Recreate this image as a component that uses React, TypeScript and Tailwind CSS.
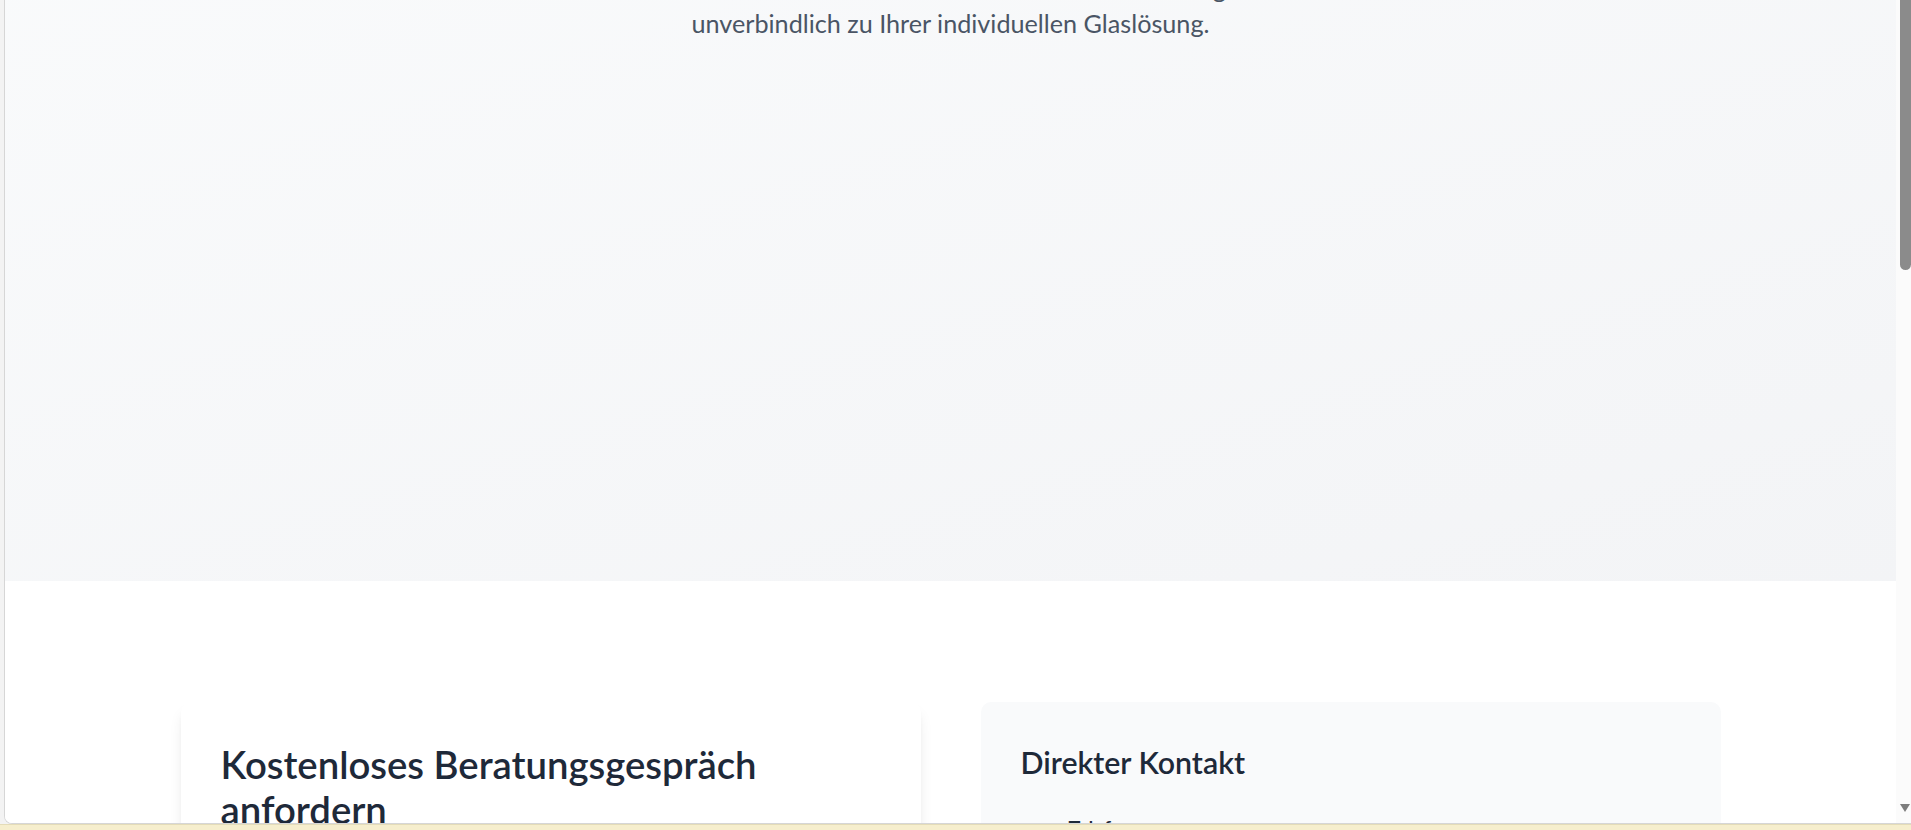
import { Phone, Mail, MapPin } from 'lucide-react';

const font = { fontFamily: 'Lato, "Noto Sans", sans-serif' };

function ContactItem({ icon, title, value }: { icon: React.ReactNode; title: string; value: string }) {
  return (
    <div className="flex gap-[18px]">
      <div className="mt-[14px] flex h-[30px] w-[30px] shrink-0 items-center justify-center text-blue-600">
        {icon}
      </div>
      <div>
        <p className="text-[20px] leading-[30px] font-semibold text-gray-800">{title}</p>
        <p className="text-[20px] leading-[30px] text-gray-600">{value}</p>
      </div>
    </div>
  );
}

export default function App() {
  return (
    <div className="flex h-[830px] w-[1911px] flex-col overflow-hidden bg-[#f3f3f3]" style={font}>
      {/* browser viewport */}
      <div className="ml-[4px] flex min-h-0 flex-1 overflow-hidden rounded-bl-[8px] border-b border-l border-[#d6d6d6] bg-white">
        <main className="min-w-0 flex-1 overflow-hidden">
          {/* Hero tail */}
          <section className="h-[581px] overflow-hidden bg-linear-to-br from-gray-50 to-gray-100">
            <p className="-mt-[29px] text-center text-[25.2px] leading-[35px] text-gray-600">
              Kontaktieren Sie uns für eine kostenlose Beratung
              <br />
              unverbindlich zu Ihrer individuellen Glaslösung.
            </p>
          </section>

          {/* Contact section */}
          <section className="bg-white pt-[121px]">
            <div className="mx-auto grid w-[1540px] grid-cols-2 gap-[60px]">
              {/* Form card */}
              <div className="rounded-[10px] bg-white p-10 shadow-lg">
                <h2 className="mb-[30px] text-[38.3px] leading-[45px] font-semibold text-gray-800">
                  Kostenloses Beratungsgespräch anfordern
                </h2>
                <form className="flex flex-col gap-6">
                  <input className="h-[55px] rounded-[8px] border border-gray-300 px-5 text-[20px]" placeholder="Name" />
                  <input className="h-[55px] rounded-[8px] border border-gray-300 px-5 text-[20px]" placeholder="E-Mail" />
                </form>
              </div>

              {/* Direct contact card */}
              <div className="rounded-[10px] bg-gray-50 p-10">
                <h3 className="mb-[30px] text-[30.3px] leading-[40px] font-semibold text-gray-800">
                  Direkter Kontakt
                </h3>
                <div className="flex flex-col gap-[30px]">
                  <ContactItem icon={<Phone size={28} />} title="Telefon" value="+49 (0) 123 456 789" />
                  <ContactItem icon={<Mail size={28} />} title="E-Mail" value="info@glas-beispiel.de" />
                  <ContactItem icon={<MapPin size={28} />} title="Adresse" value="Musterstraße 1, 12345 Musterstadt" />
                </div>
              </div>
            </div>
          </section>
        </main>

        {/* scrollbar */}
        <div className="relative flex w-[15px] shrink-0 flex-col bg-[#fbfbfb]">
          <div className="ml-[4px] h-[270px] rounded-b-full bg-[#8b8b8b]" />
          <div className="flex-1" />
          <div className="mb-[11px] ml-[4px] h-0 w-0 border-x-[5px] border-t-[8px] border-x-transparent border-t-[#7d7d7d]" />
        </div>
      </div>
      <div className="h-[6px] shrink-0 border-t border-[#e4dcb8] bg-[#f6eecd]" />
    </div>
  );
}
